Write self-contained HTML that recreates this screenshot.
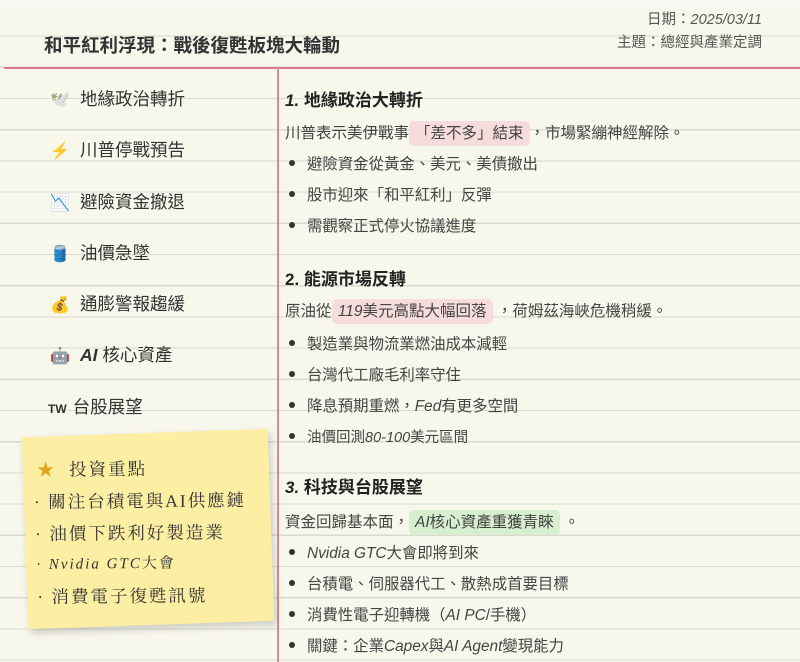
<!DOCTYPE html>
<html><head><meta charset="utf-8"><style>
*{margin:0;padding:0;box-sizing:border-box}
body{width:800px;height:662px;overflow:hidden;font-family:"Liberation Sans","Noto Sans CJK TC",sans-serif;color:#333;background:#f8f7ec;position:relative}
.lines{position:absolute;left:0;top:0;width:800px;height:662px;background:repeating-linear-gradient(to bottom,transparent 0,transparent 30px,#dadad2 30px,#dadad2 31.2px);background-position:0 5.5px}
.a{position:absolute;white-space:nowrap}
.title{left:44px;top:32px;font-size:18.5px;font-weight:bold;color:#333}
.meta{right:38px;font-size:14.5px;color:#555;text-align:right}
.hline{position:absolute;left:4px;right:0;top:67px;height:2px;background:#d97a8a}
.vline{position:absolute;left:277px;top:68px;bottom:0;width:2px;background:#d98a98}
.nav{left:50px;font-size:17.5px;color:#333}
.nav .i{display:inline-block;width:20px;margin-right:10px;font-size:16px}
.h{left:285px;font-size:17px;font-weight:bold;color:#222}
.p{left:285px;font-size:15.5px;color:#444}
.li{left:289px;font-size:15.4px;color:#444}
.li:before{content:"";display:inline-block;width:6px;height:6px;border-radius:50%;background:#333;margin-right:12px;vertical-align:middle;position:relative;top:-2px}
.hl{background:#f6dcdc;border-radius:5px;padding:4px 6px}
.hg{background:#d7eecf;border-radius:5px;padding:4px 6px}
i{font-style:italic}
.note{position:absolute;left:25px;top:433px;width:246px;height:192px;background:#fcefa4;transform:rotate(-2deg);box-shadow:2px 4px 8px rgba(0,0,0,.18);font-family:"Liberation Serif","Noto Serif CJK SC",serif;color:#333}
.note div{position:absolute;left:10px;white-space:nowrap;font-size:17.5px;letter-spacing:2px;transform:rotate(1.5deg);transform-origin:left center}
</style></head><body>
<div class="lines"></div>
<div style="position:absolute;left:0;top:0;width:800px;height:8px;background:#f8f8f4"></div>
<div class="a title">和平紅利浮現：戰後復甦板塊大輪動</div>
<div class="a meta" style="top:8px">日期：<i>2025/03/11</i></div>
<div class="a meta" style="top:31px">主題：總經與產業定調</div>
<div class="hline"></div><div class="vline"></div>

<div class="a nav" style="top:86px"><span class="i">🕊️</span>地緣政治轉折</div>
<div class="a nav" style="top:137px"><span class="i" style="color:#f07030">⚡</span>川普停戰預告</div>
<div class="a nav" style="top:189px"><span class="i">📉</span>避險資金撤退</div>
<div class="a nav" style="top:240px"><span class="i" style="color:#3070d0">🛢️</span>油價急墜</div>
<div class="a nav" style="top:291px"><span class="i">💰</span>通膨警報趨緩</div>
<div class="a nav" style="top:342px"><span class="i">🤖</span><b><i>AI</i></b> 核心資產</div>
<div class="a nav" style="top:394px;left:48px"><b style="font-size:12px;margin-right:6px">TW</b>台股展望</div>

<div class="a h" style="top:86px"><i>1.</i> 地緣政治大轉折</div>
<div class="a p" style="top:121px">川普表示美伊戰事<span class="hl">「差不多」結束</span>，市場緊繃神經解除。</div>
<div class="a li" style="top:152px">避險資金從黃金、美元、美債撤出</div>
<div class="a li" style="top:183px">股市迎來「和平紅利」反彈</div>
<div class="a li" style="top:214px">需觀察正式停火協議進度</div>

<div class="a h" style="top:265px">2. 能源市場反轉</div>
<div class="a p" style="top:299px">原油從 <span class="hl" style="margin-left:-4px"><i>119</i>美元高點大幅回落</span> ，荷姆茲海峽危機稍緩。</div>
<div class="a li" style="top:332px">製造業與物流業燃油成本減輕</div>
<div class="a li" style="top:363px">台灣代工廠毛利率守住</div>
<div class="a li" style="top:394px">降息預期重燃，<i>Fed</i>有更多空間</div>
<div class="a li" style="top:426px;font-size:14.5px">油價回測<i>80-100</i>美元區間</div>

<div class="a h" style="top:473px"><i>3.</i> 科技與台股展望</div>
<div class="a p" style="top:510px">資金回歸基本面，<span class="hg"><i>AI</i>核心資產重獲青睞</span> 。</div>
<div class="a li" style="top:541px"><i>Nvidia GTC</i>大會即將到來</div>
<div class="a li" style="top:572px">台積電、伺服器代工、散熱成首要目標</div>
<div class="a li" style="top:603px">消費性電子迎轉機（<i>AI PC</i>/手機）</div>
<div class="a li" style="top:634px">關鍵：企業<i>Capex</i>與<i>AI Agent</i>變現能力</div>

<div class="note">
<div style="top:20px;left:14px"><span style="color:#e0a820">★</span>&nbsp; 投資重點</div>
<div style="top:52px">· 關注台積電與AI供應鏈</div>
<div style="top:84px">· 油價下跌利好製造業</div>
<div style="top:116px;font-size:15px">· <i>Nvidia GTC</i>大會</div>
<div style="top:147px">· 消費電子復甦訊號</div>
</div>
</body></html>
